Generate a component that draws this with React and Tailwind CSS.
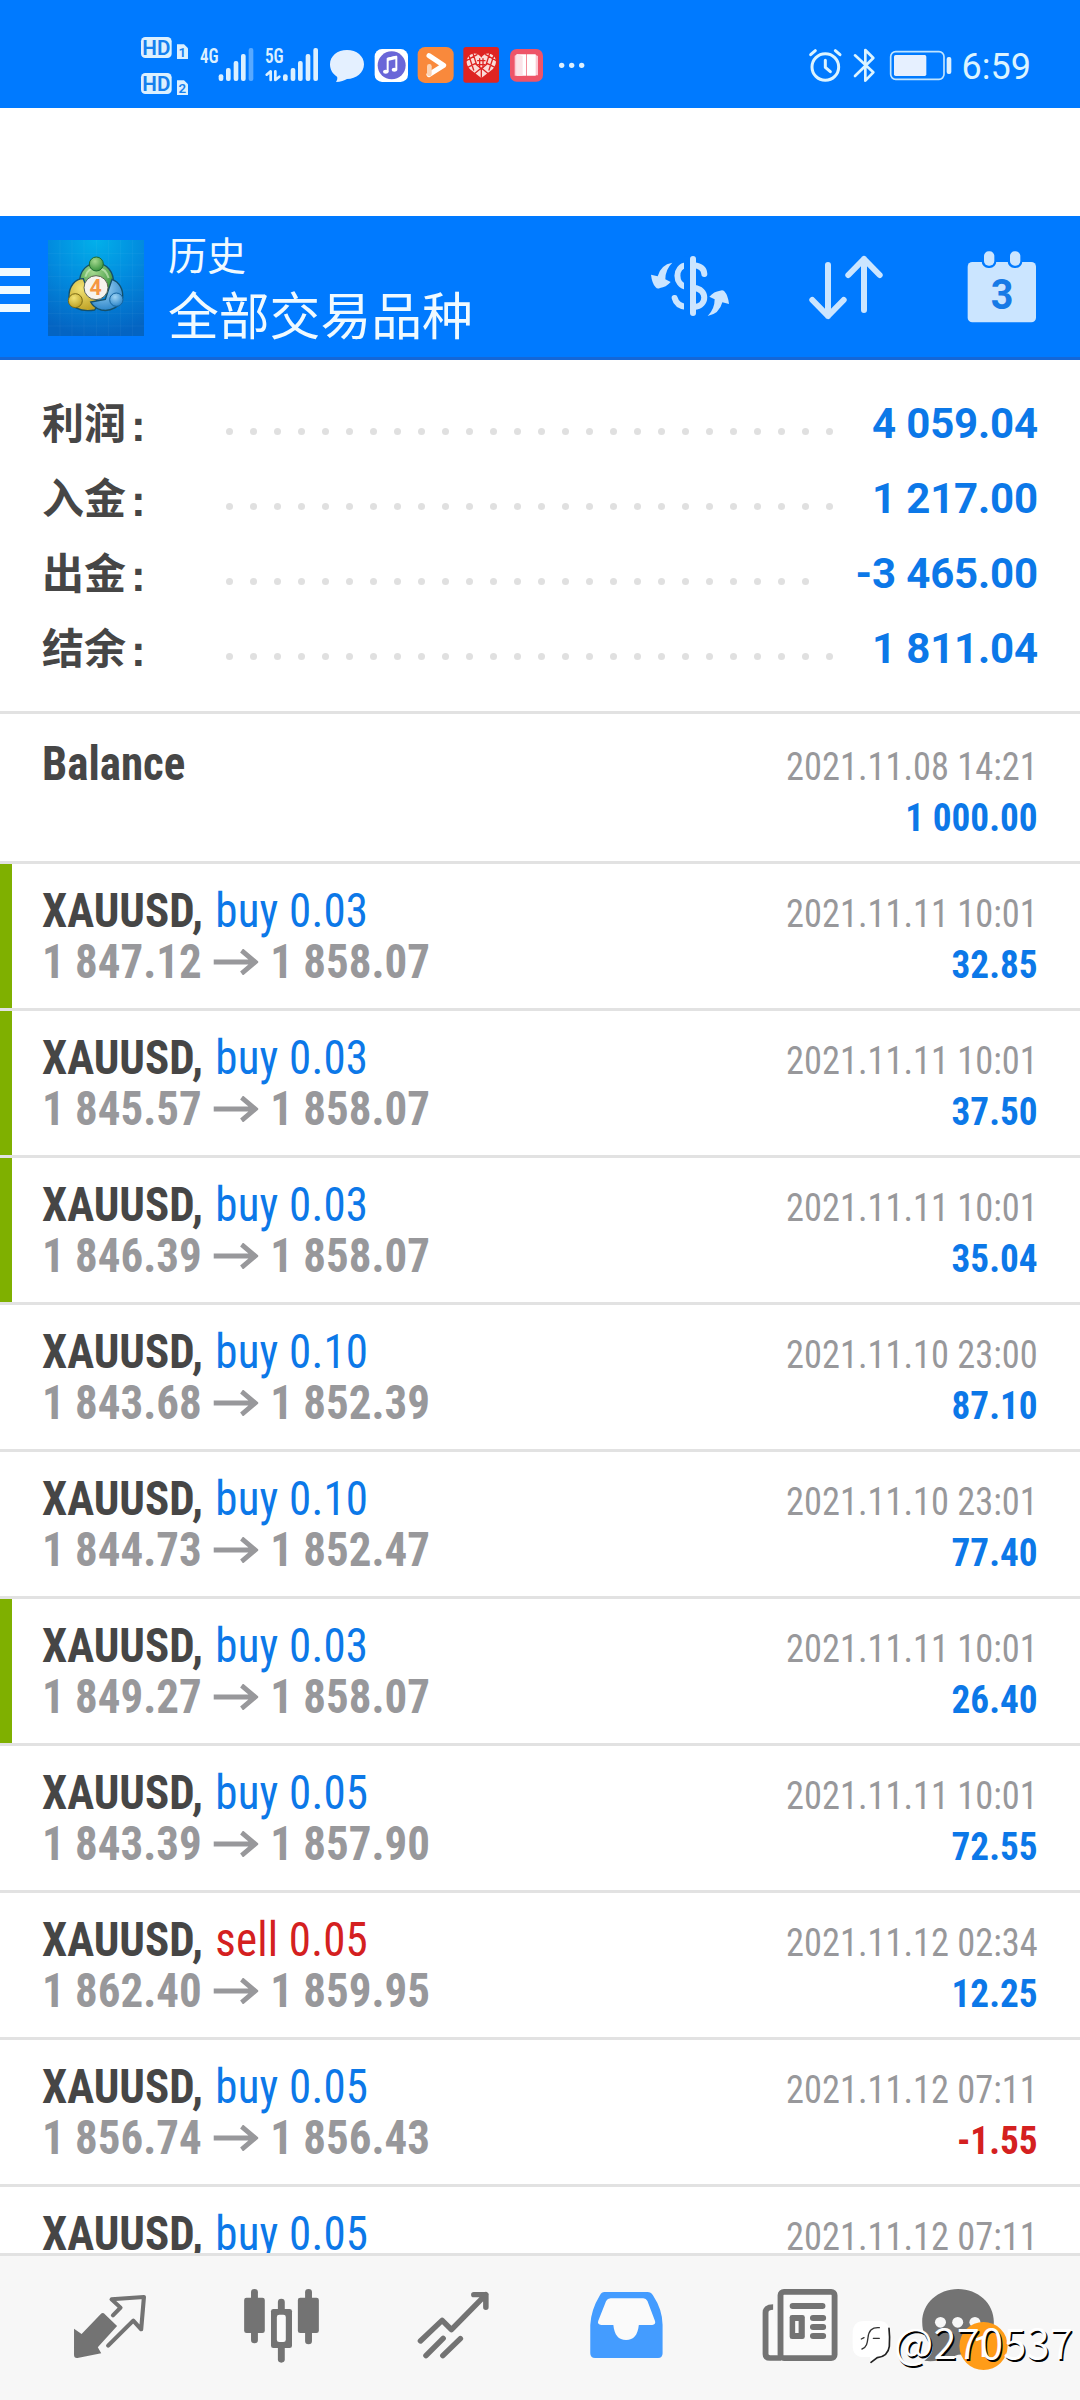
const summary = [
    { label: "利润", value: "4 059.04", dots: 26 },
    { label: "入金", value: "1 217.00", dots: 26 },
    { label: "出金", value: "-3 465.00", dots: 25 },
    { label: "结余", value: "1 811.04", dots: 26 },
];

const deals = [
    { side: "buy", volume: "0.03", open: "1 847.12", close: "1 858.07", time: "2021.11.11 10:01", profit: "32.85", marked: true },
    { side: "buy", volume: "0.03", open: "1 845.57", close: "1 858.07", time: "2021.11.11 10:01", profit: "37.50", marked: true },
    { side: "buy", volume: "0.03", open: "1 846.39", close: "1 858.07", time: "2021.11.11 10:01", profit: "35.04", marked: true },
    { side: "buy", volume: "0.10", open: "1 843.68", close: "1 852.39", time: "2021.11.10 23:00", profit: "87.10" },
    { side: "buy", volume: "0.10", open: "1 844.73", close: "1 852.47", time: "2021.11.10 23:01", profit: "77.40" },
    { side: "buy", volume: "0.03", open: "1 849.27", close: "1 858.07", time: "2021.11.11 10:01", profit: "26.40", marked: true },
    { side: "buy", volume: "0.05", open: "1 843.39", close: "1 857.90", time: "2021.11.11 10:01", profit: "72.55" },
    { side: "sell", volume: "0.05", open: "1 862.40", close: "1 859.95", time: "2021.11.12 02:34", profit: "12.25" },
    { side: "buy", volume: "0.05", open: "1 856.74", close: "1 856.43", time: "2021.11.12 07:11", profit: "-1.55" },
    { side: "buy", volume: "0.05", time: "2021.11.12 07:11" },
];

// icons are drawn on a 3x grid
function Glyph({ x, y = 0, w, h = 270, children }) {
    return (
        <svg
            className="shrink-0"
            width={w / 3}
            height={h / 3}
            viewBox={`${x} ${y} ${w} ${h}`}
            fill="#dcf0ff"
            strokeLinecap="round"
            strokeLinejoin="round"
        >
            {children}
        </svg>
    );
}

function Bars({ xs, fade }) {
    const tops = [163, 144, 123, 102, 84];
    return xs.map((x, i) => (
        <rect
            key={x}
            x={x}
            y={tops[i]}
            width="14"
            height={183 - tops[i]}
            rx="6"
            fillOpacity={fade && i === 4 ? 0.4 : 1}
        />
    ));
}

function StatusBar() {
    return (
        <div className="flex h-[108px] justify-between bg-[#007aff] pt-5 pr-[49px] pl-[140px]">
            <div className="flex">
                <Glyph x={60} w={170}>
                    <rect x="63" y="51" width="92" height="63" rx="13" />
                    <rect x="63" y="159" width="92" height="63" rx="13" />
                    <path d="M171 73H192L204 85V117H171Z" />
                    <path d="M171 181H192L204 193V225H171Z" />
                    <g fill="#1580ee" fontFamily="Roboto" fontWeight="600" textAnchor="middle">
                        <text x="109" y="104" fontSize="62">HD</text>
                        <text x="109" y="212" fontSize="62">HD</text>
                        <text x="187" y="110" fontSize="40">1</text>
                        <text x="187" y="218" fontSize="40">2</text>
                    </g>
                </Glyph>
                <Glyph x={230} w={190}>
                    <text x="239" y="128" fontSize="61" fontFamily="Roboto Condensed" fontWeight="600" textLength="56" lengthAdjust="spacingAndGlyphs">
                        4G
                    </text>
                    <Bars xs={[295, 317, 340, 362, 385]} fade />
                </Glyph>
                <Glyph x={420} w={195}>
                    <text x="435" y="128" fontSize="61" fontFamily="Roboto Condensed" fontWeight="600" textLength="56" lengthAdjust="spacingAndGlyphs">
                        5G
                    </text>
                    <path d="M440 164L452 154V180M466 154V180L478 170" fill="none" stroke="#dcf0ff" strokeWidth="8" />
                    <Bars xs={[489, 512, 534, 557, 580]} />
                </Glyph>
                <Glyph x={615} w={135}>
                    <path d="M681 90C710 90 732 108 732 133C732 158 709 177 681 177C674 180 662 186 648 186C652 180 653 174 651 170C638 162 630 149 630 133C630 108 652 90 681 90Z" fill="#e4f0ff" />
                </Glyph>
                <Glyph x={750} w={130}>
                    <rect x="764" y="87" width="100" height="99" rx="22" fill="#fff" />
                    <circle cx="815" cy="136" r="42" fill="#6a66d8" />
                    <path d="M803 155V116L829 110V149" fill="none" stroke="#fff" strokeWidth="6" />
                    <path d="M803 113L829 107V117L803 123Z" fill="#fff" />
                    <ellipse cx="797" cy="155" rx="8" ry="6" fill="#fff" />
                    <ellipse cx="823" cy="149" rx="8" ry="6" fill="#fff" />
                </Glyph>
                <Glyph x={880} w={135}>
                    <rect x="894" y="81" width="108" height="108" rx="22" fill="#f9893c" />
                    <path d="M928 107L972 136L928 164" fill="none" stroke="#fff" strokeWidth="15" />
                    <path d="M929 162V139" stroke="#fcd3b4" strokeWidth="14" />
                </Glyph>
                <Glyph x={1015} w={140}>
                    <rect x="1031" y="81" width="107" height="107" rx="8" fill="#de2422" />
                    <path d="M1085 174L1051 148C1034 130 1040 105 1060 101C1072 99 1080 106 1085 113C1090 106 1098 99 1110 101C1130 105 1136 130 1119 148Z" fill="#fbdcd8" />
                    <g stroke="#de2422" strokeWidth="4" fill="none">
                        <path d="M1040 122L1072 104M1044 142L1068 130M1060 100L1070 132M1048 108L1062 150M1130 122L1098 104M1126 142L1102 130M1110 100L1100 132M1122 108L1108 150M1066 160L1085 144L1104 160M1085 146V172M1068 132L1085 146L1102 132" />
                        <path d="M1074 122H1096M1074 134H1096M1080 116V142M1090 116V142" />
                    </g>
                </Glyph>
                <Glyph x={1155} w={135}>
                    <rect x="1170" y="87" width="99" height="98" rx="20" fill="#ee5468" />
                    <path d="M1184 107L1192 103V167H1184ZM1245 104L1254 108V166H1245Z" fill="#fbc8d2" />
                    <path d="M1190 103H1218V167H1190ZM1220 103H1247V167H1220Z" fill="#fff" />
                    <path d="M1190 103L1208 108V167H1190Z" fill="#fbe3e8" />
                </Glyph>
                <Glyph x={1290} w={120}>
                    <circle cx="1325" cy="136" r="8" />
                    <circle cx="1355" cy="136" r="8" />
                    <circle cx="1385" cy="136" r="8" />
                </Glyph>
            </div>
            <div className="flex">
                <Glyph x={75} w={130}>
                    <g fill="none" stroke="#dcf4ff" strokeWidth="9">
                        <circle cx="136" cy="141" r="40" />
                        <path d="M92 104L106 92M180 104L166 92" />
                        <path d="M136 121V142L151 155" />
                    </g>
                </Glyph>
                <Glyph x={205} w={105}>
                    <path d="M226 106L281 157L257 182V90L281 114L226 168" fill="none" stroke="#dcf4ff" strokeWidth="8" />
                </Glyph>
                <Glyph x={310} w={230}>
                    <rect x="333" y="95" width="160" height="83" rx="15" fill="none" stroke="#bfe4ff" strokeWidth="5" />
                    <rect x="343" y="105" width="97" height="63" rx="5" fill="#e6f0ff" />
                    <rect x="501" y="111" width="14" height="51" rx="6" />
                </Glyph>
                <div className="pt-0.5 pl-[2px] font-[Roboto] text-[36px] leading-[90px] text-[#dcf4ff]">
                    6:59
                </div>
            </div>
        </div>
    );
}

function Logo() {
    return (
        <svg className="h-24 w-24 shrink-0" viewBox="144 90 288 288">
            <defs>
                <radialGradient id="sky" cx="0.5" cy="0" r="1">
                    <stop offset="0" stopColor="#02b0ea" />
                    <stop offset="0.5" stopColor="#028ade" />
                    <stop offset="1" stopColor="#0464c2" />
                </radialGradient>
                <radialGradient id="green" cx="0.4" cy="0.3" r="0.8">
                    <stop offset="0" stopColor="#a5d98f" />
                    <stop offset="1" stopColor="#2b8a34" />
                </radialGradient>
                <radialGradient id="yellow" cx="0.4" cy="0.3" r="0.8">
                    <stop offset="0" stopColor="#f2e374" />
                    <stop offset="1" stopColor="#b8991c" />
                </radialGradient>
                <radialGradient id="blue" cx="0.4" cy="0.3" r="0.8">
                    <stop offset="0" stopColor="#9fd4f4" />
                    <stop offset="1" stopColor="#1f7cc4" />
                </radialGradient>
            </defs>
            <rect x="144" y="90" width="288" height="288" fill="url(#sky)" />
            <path
                d="M144 130H432M144 165H432M144 200H432M144 240H432M144 275H432M144 310H432M144 348H432M180 90V378M216 90V378M252 90V378M290 90V378M326 90V378M362 90V378M398 90V378"
                stroke="#fff"
                strokeOpacity="0.07"
                strokeWidth="2"
            />
            <g stroke="#14506b" strokeWidth="4">
                <path d="M238 222C238 180 262 160 290 160C320 160 342 184 341 224L314 244H262Z" fill="url(#green)" />
                <path d="M250 206C226 206 206 228 207 262C208 290 240 308 284 300L298 280L262 240Z" fill="url(#yellow)" />
                <path d="M336 208C358 216 370 238 368 262C364 290 330 306 304 300C290 296 278 288 272 276L316 268Z" fill="url(#blue)" />
            </g>
            <path d="M256 200C262 178 274 174 290 174C306 174 320 184 326 204" fill="none" stroke="#d5f0c8" strokeOpacity="0.6" strokeWidth="6" />
            <circle cx="289" cy="162" r="21" fill="url(#green)" stroke="#1d6a30" strokeWidth="3" />
            <circle cx="226" cy="272" r="21" fill="url(#yellow)" stroke="#7b6a14" strokeWidth="3" />
            <circle cx="349" cy="269" r="20" fill="url(#blue)" stroke="#17659f" strokeWidth="3" />
            <circle cx="288" cy="233" r="36" fill="#f6f3ee" stroke="#5b6452" strokeWidth="3" />
            <text x="287" y="255" textAnchor="middle" fontFamily="Roboto" fontWeight="700" fontSize="64" fill="#f59642">
                4
            </text>
        </svg>
    );
}

function Header() {
    return (
        <div className="flex h-36 border-b-[3px] border-[#1467d8] bg-[#007aff]">
            <div className="flex w-12 flex-col gap-2.5 pt-[52px]">
                <div className="h-2 w-[30px] bg-[#f0faff]" />
                <div className="h-2 w-[30px] bg-[#f0faff]" />
                <div className="h-2 w-[30px] bg-[#f0faff]" />
            </div>
            <div className="pt-6">
                <Logo />
            </div>
            <div className="flex-1 pt-[13px] pl-6 font-['Noto_Sans_CJK_SC',sans-serif] text-[#f0faff]">
                <div className="text-[39px] leading-[48px]">历史</div>
                <div className="pt-[3px] text-[50.8px] leading-[66px]">全部交易品种</div>
            </div>
            <div className="flex">
                <Glyph x={60} y={18} w={390} h={423}>
                    <g fill="none" stroke="#cbe5ff" strokeWidth="18">
                        <path d="M200 166C163 168 163 226 200 230" />
                        <path d="M164 264C168 280 178 289 200 291" />
                        <path d="M222 166C244 168 252 178 253 192" />
                        <path d="M222 234C262 236 264 288 222 291" />
                    </g>
                    <rect x="192" y="140" width="36" height="175" fill="#007aff" />
                    <rect x="210" y="138" width="18" height="180" rx="9" fill="#cbe5ff" />
                    <path id="turn" d="M157 158Q122 164 113 199L93 194Q96 220 107 232Q112 238 120 234Q138 232 152 216L136 208Q136 178 157 158Z" fill="#cbe5ff" />
                    <use href="#turn" transform="rotate(180 210 238)" />
                </Glyph>
                <Glyph x={450} y={18} w={450} h={423}>
                    <g fill="none" stroke="#cbe5ff" strokeWidth="18">
                        <path d="M624 165V318M577 270L624 318L671 270" />
                        <path d="M732 300V147M685 195L732 147L779 195" />
                    </g>
                </Glyph>
                <Glyph x={900} y={18} w={480} h={423}>
                    <rect x="1043" y="156" width="205" height="181" rx="14" fill="#cbe5ff" />
                    <rect x="1085" y="116" width="44" height="58" rx="20" fill="#007aff" />
                    <rect x="1163" y="116" width="44" height="58" rx="20" fill="#007aff" />
                    <rect x="1092" y="124" width="31" height="43" rx="14" fill="#cbe5ff" />
                    <rect x="1170" y="124" width="31" height="43" rx="14" fill="#cbe5ff" />
                    <text x="1112" y="298" textLength="68" lengthAdjust="spacingAndGlyphs" fontFamily="Roboto" fontWeight="700" fontSize="130" fill="#177ae6">
                        3
                    </text>
                </Glyph>
            </div>
        </div>
    );
}

function Summary() {
    return (
        <div className="h-[354px] border-b-[3px] border-[#e2e2e2] px-[42px] pt-[26px]">
            {summary.map((row) => (
                <div key={row.label} className="flex h-[75px] font-[Roboto,'Noto_Sans_CJK_SC',sans-serif] text-[42px] leading-[75px] font-bold">
                    <div className="flex w-[184px] pt-px text-[#464646]">
                        {row.label}
                        <span className="pt-px pl-[5px] font-['Liberation_Sans'] text-[44px]">:</span>
                    </div>
                    <div className="flex flex-1 gap-[17px] pt-[42px]">
                        {Array.from({ length: row.dots }, (_, i) => (
                            <span key={i} className="h-[7px] w-[7px] shrink-0 rounded-full bg-[#e0e0e0]" />
                        ))}
                    </div>
                    <div className="tracking-[-0.15px] text-[#0c78e8]">{row.value}</div>
                </div>
            ))}
        </div>
    );
}

function Stamp({ time, amount }) {
    return (
        <div className="pt-1 text-right text-[39px] leading-[51px]">
            <div className="origin-right scale-x-[0.933] text-[#98989b]">{time}</div>
            {amount && (
                <div
                    className={`origin-right scale-x-[0.955] font-bold ${
                        amount.startsWith("-") ? "text-[#d42020]" : "text-[#0c78e8]"
                    }`}
                >
                    {amount}
                </div>
            )}
        </div>
    );
}

function Deal({ deal }) {
    return (
        <div className="flex h-[147px] shrink-0 border-b-[3px] border-[#e2e2e2]">
            <div className={deal.marked ? "w-3 bg-[#7fb000]" : "w-3"} />
            <div className="flex flex-1 justify-between pt-[21px] pr-[42px] pl-[30px]">
                <div className="origin-left scale-x-[0.937] text-[48px] leading-[51px]">
                    <div>
                        <span className="font-bold text-[#464646]">XAUUSD, </span>
                        <span
                            className={`pl-0.5 tracking-[0.2px] ${
                                deal.side === "buy" ? "text-[#0c78e8]" : "text-[#d42020]"
                            }`}
                        >
                            {deal.side} {deal.volume}
                        </span>
                    </div>
                    {deal.open && (
                        <div className="flex font-bold text-[#98989b]">
                            {deal.open}
                            <svg className="mt-[13px] mr-[13px] ml-3 h-[26px] w-12" viewBox="0 0 48 26" fill="none" stroke="#98989b" strokeWidth="5">
                                <path d="M0 13H45M30 1.5L44.500 13L30 24.500" />
                            </svg>
                            {deal.close}
                        </div>
                    )}
                </div>
                <Stamp time={deal.time} amount={deal.profit} />
            </div>
        </div>
    );
}

function NavIcon({ x, children }) {
    return (
        <svg
            className="h-36 w-[172px] shrink-0"
            viewBox={`${x} 288 499.5 432`}
            preserveAspectRatio="none"
            fill="#737373"
            strokeLinecap="round"
            strokeLinejoin="round"
        >
            {children}
        </svg>
    );
}

function BottomNav() {
    return (
        <div className="relative flex h-[147px] border-t-[3px] border-[#e2e2e2] bg-[#f7f7f7] pl-6">
            <NavIcon x={69.7}>
                <path d="M300 458L340 498L284 562L294 580L225 594Q215 595 215 585V506L237 522L292 463Q298 456 304 462Z" />
                <path d="M328 466L350 443L324 418L418 411L410 508L387 482L314 557" fill="none" stroke="#737373" strokeWidth="12" />
            </NavIcon>
            <NavIcon x={569.2}>
                <rect x="729" y="387" width="20" height="163" rx="10" />
                <rect x="709" y="413" width="60" height="106" rx="7" />
                <rect x="807" y="416" width="20" height="192" rx="10" />
                <rect x="787" y="447" width="61" height="117" rx="7" />
                <rect x="804" y="464" width="26" height="82" rx="7" fill="#fafafa" />
                <rect x="886" y="387" width="20" height="166" rx="10" />
                <rect x="865" y="413" width="61" height="106" rx="7" />
            </NavIcon>
            <NavIcon x={1068.7}>
                <g fill="none" stroke="#737373" strokeWidth="16">
                    <path d="M1221 543L1284 481L1311 509L1411 404M1376 404H1411V442" />
                    <path d="M1237 587L1287 535M1286 587L1337 536" />
                </g>
            </NavIcon>
            <NavIcon x={0}>
                <path d="M187 396H312Q322 396 328 406Q356 450 356 495V580Q356 594 343 594H160Q146 594 146 580V495Q148 450 174 406Q179 396 187 396Z" fill="#449cff" />
                <path d="M205 415H300Q308 415 312 423L334 483Q337 494 326 495H287C284 525 272 540 250 540C228 540 216 525 213 495H178Q166 494 169 483L192 423Q196 415 205 415Z" fill="#fafafa" />
            </NavIcon>
            <NavIcon x={499.5}>
                <path d="M677 441Q655 441 655 458V582Q655 594 668 594H700" fill="#fafafa" stroke="#737373" strokeWidth="17" strokeLinecap="butt" />
                <rect x="698.5" y="395.5" width="157" height="199" rx="10" fill="#fafafa" stroke="#737373" strokeWidth="17" />
                <path d="M734 438H820M793 474H822M793 501H822M793 528H822" stroke="#737373" strokeWidth="18" />
                <rect x="725" y="465" width="44" height="72" rx="7" />
                <rect x="741" y="483" width="10" height="36" fill="#fafafa" />
            </NavIcon>
            <NavIcon x={999}>
                <path d="M1214 387C1272 387 1318 430 1318 486C1318 545 1272 584 1214 584C1190 594 1150 608 1116 602C1132 590 1140 580 1140 560C1120 540 1110 516 1110 486C1110 430 1156 387 1214 387Z" />
                <g fill="#f7f7f7">
                    <circle cx="1163" cy="487" r="16" />
                    <circle cx="1213" cy="487" r="16" />
                    <circle cx="1263" cy="487" r="16" />
                </g>
                <ellipse cx="1288" cy="558" rx="70" ry="72" fill="#ff9c18" />
                <text x="1286" y="592" textAnchor="middle" fontFamily="Roboto" fontWeight="500" fontSize="94" fill="#fff">
                    1
                </text>
            </NavIcon>
            <div className="absolute top-[60px] left-[850px] flex items-start">
                <svg className="h-[50px] w-[46px] shrink-0" viewBox="30 115 138 150" fill="none" strokeLinecap="round">
                    <path d="M72 130H116Q150 130 150 168V200Q150 238 114 240L92 254L90 238H72Q38 238 38 204V168Q38 130 72 130Z" fill="#fff" />
                    <path d="M147 152Q150 176 148 206Q144 236 112 240L93 254" stroke="#222" strokeWidth="5" />
                    <path d="M66 214C80 210 82 196 84 180C86 158 96 148 118 150M64 184L72 180M100 182H118" stroke="#333" strokeWidth="4" />
                </svg>
                <span className="ml-[-2px] font-['Noto_Sans_CJK_SC',sans-serif] text-[42px] leading-[50px] font-[350] tracking-[0.2px] text-white [text-shadow:1.5px_1.5px_0_#000]">
                    @270537
                </span>
            </div>
        </div>
    );
}

export default function App() {
    return (
        <div className="flex h-[2400px] w-[1080px] flex-col overflow-hidden bg-white">
            <StatusBar />
            <div className="h-[108px] shrink-0 bg-white" />
            <Header />
            <Summary />
            <div className="flex h-[1539px] flex-col overflow-hidden font-['Roboto_Condensed',sans-serif]">
                <div className="flex h-[150px] shrink-0 justify-between border-b-[3px] border-[#e2e2e2] px-[42px] pt-6">
                    <div className="origin-left scale-x-[0.937] text-[48px] leading-[51px] font-bold text-[#464646]">
                        Balance
                    </div>
                    <Stamp time="2021.11.08 14:21" amount="1 000.00" />
                </div>
                {deals.map((deal, index) => (
                    <Deal key={index} deal={deal} />
                ))}
            </div>
            <BottomNav />
        </div>
    );
}
